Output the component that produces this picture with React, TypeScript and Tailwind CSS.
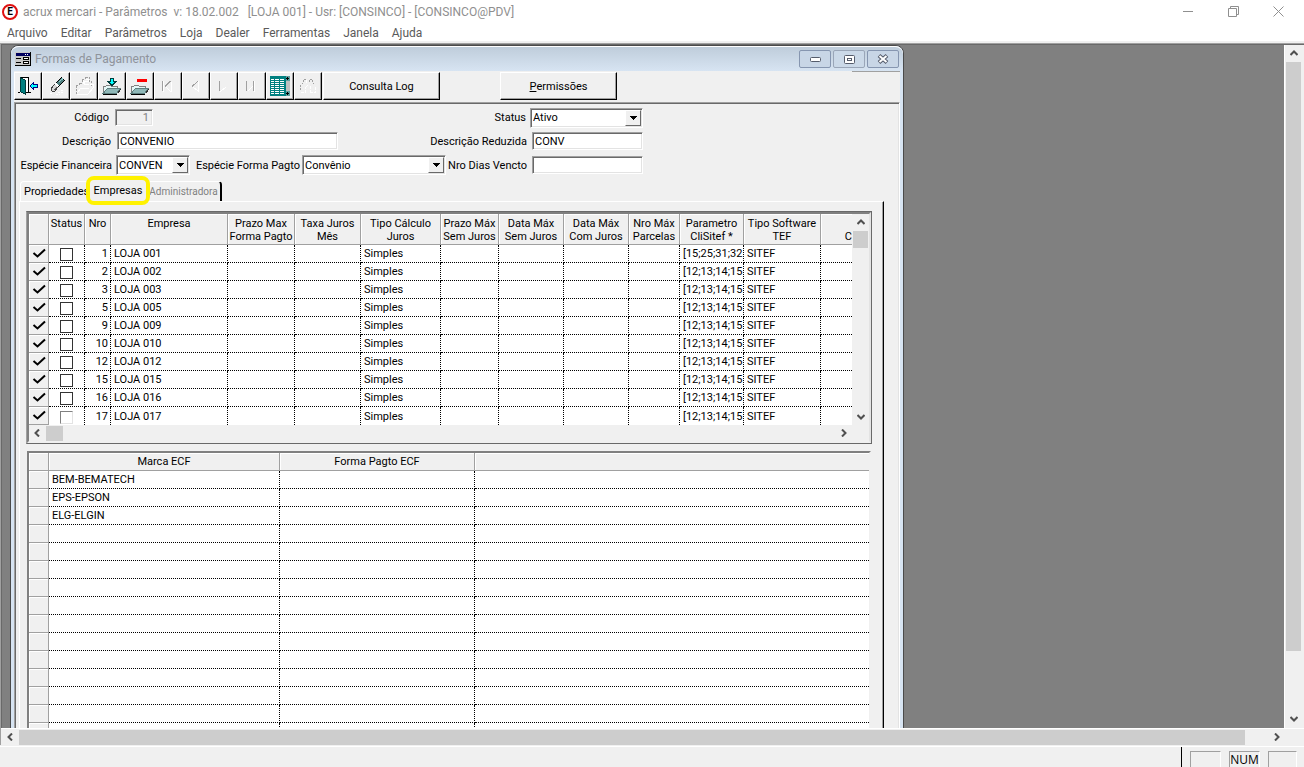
import { ReactNode } from 'react';
import clsx from 'clsx';

const menus = ['Arquivo', 'Editar', 'Parâmetros', 'Loja', 'Dealer', 'Ferramentas', 'Janela', 'Ajuda'];

const lojas = [1, 2, 3, 5, 9, 10, 12, 15, 16, 17];

const columns = [
  { label: '', width: 'w-5' },
  { label: 'Status', width: 'w-[36px]' },
  { label: 'Nro', width: 'w-[26px]' },
  { label: 'Empresa', width: 'w-[117px]' },
  { label: 'Prazo Max\nForma Pagto', width: 'w-[67px]' },
  { label: 'Taxa Juros\nMês', width: 'w-[66px]' },
  { label: 'Tipo Cálculo\nJuros', width: 'w-[80px]' },
  { label: 'Prazo Máx\nSem Juros', width: 'w-[58px]' },
  { label: 'Data Máx\nSem Juros', width: 'w-[65px]' },
  { label: 'Data Máx\nCom Juros', width: 'w-[65px]' },
  { label: 'Nro Máx\nParcelas', width: 'w-[51px]' },
  { label: 'Parametro\nCliSitef *', width: 'w-[64px]' },
  { label: 'Tipo Software\nTEF', width: 'w-[77px]' },
];

const marcas = ['BEM-BEMATECH', 'EPS-EPSON', 'ELG-ELGIN', '', '', '', '', '', '', '', '', '', '', '', ''];

const sunken =
  'border border-t-[#a0a0a0] border-l-[#a0a0a0] border-r-white border-b-white shadow-[inset_1px_1px_0_#696969,inset_-1px_-1px_0_#e3e3e3]';
const raised =
  'border border-t-white border-l-white border-r-black border-b-black bg-[#f0f0f0] shadow-[inset_-1px_-1px_0_#a0a0a0]';
const headCell = 'border-r border-b border-[#a0a0a0] bg-[#f0f0f0] font-normal shadow-[inset_1px_1px_0_white]';
const cell = 'h-[18px] overflow-hidden whitespace-nowrap border-r border-b border-dotted border-black p-0';

function Icon({ children }: { children: ReactNode }) {
  return (
    <svg width="20" height="20" viewBox="0 0 20 20" fill="none" shapeRendering="crispEdges">
      {children}
    </svg>
  );
}

function Folder() {
  return (
    <>
      <path d="M1.5 17V10.5H3.5L4.5 9.5H8.5L9.5 10.5H15.5V12" fill="#e4f6f6" stroke="#808080" />
      <path d="M1 17.5L5.5 12.5H18.5L14.5 17.5Z" fill="#8fb8b8" stroke="#5f8080" />
      <path d="M1 18.5H14.5" stroke="#000" />
      <path d="M15.5 17.5L19 13" stroke="#303030" />
    </>
  );
}

const tools = [
  {
    name: 'Sair',
    icon: (
      <Icon>
        <path d="M3 1.5H10.5V16.5H7" fill="#fff" stroke="#000" />
        <path d="M2.5 1.5L7.5 4.5V18.5L2.5 15.5Z" fill="#008080" stroke="#003c3c" />
        <path d="M0 16.5H2M11 16.5H13" stroke="#000" />
        <path d="M12 10L15.5 6.5V8.5H19V11.5H15.5V13.5Z" fill="#00ffff" stroke="#000080" />
      </Icon>
    ),
  },
  {
    name: 'Limpar',
    icon: (
      <Icon>
        <path d="M4 17.5H7M10 18.5H14M12 16.5H17M15 14.5H18" stroke="#fff" strokeDasharray="2 1" />
        <path d="M15.5 1.5L18.5 4.5L12 11L9 8Z" fill="#4f7f7f" stroke="#000" />
        <path d="M13 6L17 2.5" stroke="#8fd0d0" />
        <path d="M9 8L12 11L8.5 15.5H6.5L5.5 14V12Z" fill="#d8d8d8" stroke="#404040" />
        <path d="M9.5 7.5L12.5 10.5" stroke="#fff" strokeWidth="2" />
        <path d="M11 11L8 14" stroke="#606060" />
      </Icon>
    ),
  },
  {
    name: 'Abrir',
    icon: (
      <Icon>
        <path d="M2 18V9H5V7H8V3H11V1H15V5H17V10" stroke="#a0a0a0" strokeDasharray="2 1" />
        <path d="M3 18H14L19 12V8H16M3 17L7 12H15M12 3H14V5H10V8H15M9 4V8" stroke="#fff" />
      </Icon>
    ),
  },
  {
    name: 'Salvar',
    icon: (
      <Icon>
        <Folder />
        <path d="M8.5 2.5H11.5V5.5H14L10 9.5L6 5.5H8.5Z" fill="#00ffff" stroke="#003c3c" />
      </Icon>
    ),
  },
  {
    name: 'Excluir',
    icon: (
      <Icon>
        <Folder />
        <rect x="7" y="3" width="10" height="3" fill="#ff0000" />
      </Icon>
    ),
  },
  {
    name: 'Primeiro',
    icon: (
      <Icon>
        <path d="M4.5 5V15" stroke="#a0a0a0" />
        <path d="M5.5 5V16M8 11L13 16M13.5 6V16" stroke="#fff" />
        <path d="M7 10.5L12.5 5" stroke="#a0a0a0" />
      </Icon>
    ),
  },
  {
    name: 'Anterior',
    icon: (
      <Icon>
        <path d="M12.5 5V16M7 11L12 15" stroke="#fff" />
        <path d="M6 10.5L12 5" stroke="#a0a0a0" />
      </Icon>
    ),
  },
  {
    name: 'Próximo',
    icon: (
      <Icon>
        <path d="M5.5 5V15" stroke="#a0a0a0" />
        <path d="M6.5 15.5L12.5 10.5" stroke="#fff" />
      </Icon>
    ),
  },
  {
    name: 'Último',
    icon: (
      <Icon>
        <path d="M4.5 5V15M11.5 5V15" stroke="#a0a0a0" />
        <path d="M5.5 15.5L10.5 10.5M12.5 5V16" stroke="#fff" />
      </Icon>
    ),
  },
  {
    name: 'Grade',
    icon: (
      <Icon>
        <rect x="0" y="0" width="20" height="20" fill="#008080" />
        <path d="M1 3.5H14M1 5.5H14M1 7.5H14M1 9.5H14M1 11.5H14M1 13.5H14M1 15.5H14M1 17.5H14" stroke="#fff" />
        <path d="M4.5 2V19M9.5 2V19" stroke="#008080" />
        <rect x="16" y="5" width="4" height="10" fill="#c0c0c0" />
        <rect x="16" y="0" width="4" height="5" fill="#5f9f9f" />
        <rect x="16" y="15" width="4" height="5" fill="#5f9f9f" />
        <path d="M16 2.5H19M17.5 1V4M16 17.5H19M17.5 16V19" stroke="#000" />
      </Icon>
    ),
  },
  {
    name: 'Localizar',
    icon: (
      <Icon>
        <path d="M2.5 14V10L5.5 5.5V3.5H8M11 6V3.5H14L16 8" stroke="#a0a0a0" strokeDasharray="2 1" />
        <path d="M3 16.5H7.5V12L9.5 9M12 16.5H17.5V10M8.5 4V8M12 10V16" stroke="#fff" strokeDasharray="3 1" />
      </Icon>
    ),
  },
];

type Direction = 'up' | 'down' | 'left' | 'right';

const rotation = { up: '', right: 'rotate-90', down: 'rotate-180', left: '-rotate-90' };

function ScrollArrow({ dir }: { dir: Direction }) {
  return (
    <button type="button" aria-label={dir} className="flex size-4 shrink-0 items-center justify-center">
      <svg width="8" height="6" viewBox="0 0 8 6" fill="none" className={rotation[dir]}>
        <path d="M0.5 5L4 1.5L7.5 5" stroke="#505050" strokeWidth="2" />
      </svg>
    </button>
  );
}

function ComboBox({ id, value, className }: { id: string; value: string; className: string }) {
  return (
    <div className={clsx('relative h-5 bg-white', sunken, className)}>
      <select id={id} defaultValue={value} className="h-full w-full appearance-none pl-[2px] outline-none">
        <option>{value}</option>
      </select>
      <span className="pointer-events-none absolute inset-y-px right-px flex w-4 items-center justify-center border border-t-white border-l-white border-r-[#696969] border-b-[#696969] bg-[#f0f0f0]">
        <svg width="7" height="4" viewBox="0 0 7 4" shapeRendering="crispEdges">
          <path d="M0 0H7L3.5 4Z" />
        </svg>
      </span>
    </div>
  );
}

function FormFields() {
  return (
    <div className="flex w-[627px] flex-col pt-[3px]">
      <div className="flex h-[23px] items-center justify-between">
        <div className="flex items-center gap-[6px]">
          <label htmlFor="codigo" className="w-[93px] text-right">Código</label>
          <input id="codigo" defaultValue="1" disabled className={clsx('h-[17px] w-[38px] bg-[#f0f0f0] px-[3px] text-right text-[#808080]', sunken)} />
        </div>
        <div className="flex items-center gap-1">
          <label htmlFor="status">Status</label>
          <ComboBox id="status" value="Ativo" className="w-[113px]" />
        </div>
      </div>
      <div className="flex h-6 items-center justify-between">
        <div className="flex items-center gap-[6px]">
          <label htmlFor="descricao" className="w-[95px] text-right">Descrição</label>
          <input id="descricao" defaultValue="CONVENIO" className={clsx('h-[18px] w-[221px] bg-white px-[2px] outline-none', sunken)} />
        </div>
        <div className="flex items-center gap-[5px]">
          <label htmlFor="reduzida">Descrição Reduzida</label>
          <input id="reduzida" defaultValue="CONV" className={clsx('h-[18px] w-[111px] bg-white px-[2px] outline-none', sunken)} />
        </div>
      </div>
      <div className="flex h-6 items-center justify-between">
        <div className="flex items-center">
          <label htmlFor="especie" className="w-[96px] text-right">Espécie Financeira</label>
          <ComboBox id="especie" value="CONVEN" className="ml-1 w-[74px]" />
          <label htmlFor="forma" className="w-[110px] text-right">Espécie Forma Pagto</label>
          <ComboBox id="forma" value="Convênio" className="ml-[2px] w-[144px]" />
        </div>
        <div className="flex items-center gap-[5px]">
          <label htmlFor="dias">Nro Dias Vencto</label>
          <input id="dias" className={clsx('h-[18px] w-[111px] bg-white px-[2px] outline-none', sunken)} />
        </div>
      </div>
    </div>
  );
}

function EmpresasGrid() {
  return (
    <div className="border border-[#696969] border-l-[#a0a0a0]">
      <div className="border-2 border-t-[#808080] border-r-[#e3e3e3] border-b-[#f0f0f0] border-l-[#808080]">
        <div className="flex">
          <div className="h-[211px] min-w-0 flex-1 overflow-hidden bg-white">
            <table className="w-full table-fixed border-separate border-spacing-0">
              <thead>
                <tr className="h-[31px] align-top">
                  {columns.map((c, i) => (
                    <th key={i} className={clsx(headCell, c.width, 'whitespace-pre px-0 pt-[3px] pb-0 leading-[13px]')}>
                      {c.label}
                    </th>
                  ))}
                  <th className={clsx(headCell, 'overflow-hidden border-r-0 px-0 pt-[3px] pb-0 text-right leading-[13px] whitespace-pre')}>{'\nC'}</th>
                </tr>
              </thead>
              <tbody>
                {lojas.map((nro) => {
                  const last = nro === 17;
                  return (
                    <tr key={nro}>
                      <td className="h-[18px] border-r border-b border-[#a0a0a0] bg-[#f0f0f0] p-0 shadow-[inset_1px_1px_0_white]">
                        <svg width="14" height="11" viewBox="0 0 14 11" fill="none" className="mx-auto">
                          <path d="M1.5 5L5.500 8.5L13 1.5" stroke="#000" strokeWidth="2" />
                        </svg>
                      </td>
                      <td className={clsx(cell, last && 'border-b-0')}>
                        <input
                          type="checkbox"
                          aria-label={`Status ${nro}`}
                          className={clsx(
                            'mx-auto mt-[2px] block size-[13px] appearance-none border bg-white',
                            last ? 'border-t-[#808080] border-l-[#808080] border-r-[#e3e3e3] border-b-[#e3e3e3]' : 'border-[#333333]'
                          )}
                        />
                      </td>
                      <td className={clsx(cell, last && 'border-b-0', 'pr-[2px] text-right')}>{nro}</td>
                      <td className={clsx(cell, last && 'border-b-0', 'pl-[3px]')}>LOJA {String(nro).padStart(3, '0')}</td>
                      <td className={clsx(cell, last && 'border-b-0')} />
                      <td className={clsx(cell, last && 'border-b-0')} />
                      <td className={clsx(cell, last && 'border-b-0', 'pl-[3px]')}>Simples</td>
                      <td className={clsx(cell, last && 'border-b-0')} />
                      <td className={clsx(cell, last && 'border-b-0')} />
                      <td className={clsx(cell, last && 'border-b-0')} />
                      <td className={clsx(cell, last && 'border-b-0')} />
                      <td className={clsx(cell, last && 'border-b-0', 'pl-[3px]')}>{nro === 1 ? '[15;25;31;32' : '[12;13;14;15'}</td>
                      <td className={clsx(cell, last && 'border-b-0', 'pl-[3px]')}>SITEF</td>
                      <td className={clsx(cell, last && 'border-b-0', 'border-r-0')} />
                    </tr>
                  );
                })}
              </tbody>
            </table>
          </div>
          <div className="flex w-[17px] flex-col items-center">
            <ScrollArrow dir="up" />
            <div className="mt-px h-[17px] w-[15px] bg-[#cdcdcd]" />
            <div className="mt-auto">
              <ScrollArrow dir="down" />
            </div>
          </div>
        </div>
        <div className="flex h-4 items-center pr-[17px]">
          <ScrollArrow dir="left" />
          <div className="ml-px h-[15px] w-[17px] bg-[#cdcdcd]" />
          <div className="ml-auto">
            <ScrollArrow dir="right" />
          </div>
        </div>
      </div>
    </div>
  );
}

function MarcasGrid() {
  return (
    <div className="mt-[7px] mr-px ml-px border-2 border-t-[#808080] border-l-[#808080] border-r-[#f0f0f0] border-b-white bg-white">
      <table className="w-full table-fixed border-separate border-spacing-0">
        <thead>
          <tr className="h-[18px]">
            <th className={clsx(headCell, 'w-5 p-0')} />
            <th className={clsx(headCell, 'w-[231px] p-0')}>Marca ECF</th>
            <th className={clsx(headCell, 'w-[195px] p-0')}>Forma Pagto ECF</th>
            <th className={clsx(headCell, 'border-r-0 p-0')} />
          </tr>
        </thead>
        <tbody>
          {marcas.map((marca, i) => (
            <tr key={i}>
              <td className="h-[18px] border-r border-b border-[#a0a0a0] bg-[#f0f0f0] p-0 shadow-[inset_1px_1px_0_white]" />
              <td className={clsx(cell, 'pl-[3px]')}>{marca}</td>
              <td className={cell} />
              <td className={clsx(cell, 'border-r-0')} />
            </tr>
          ))}
        </tbody>
      </table>
    </div>
  );
}

function Tabs() {
  return (
    <div className="ml-[5px] flex h-5 items-end">
      <button type="button" className="h-5 w-[69px] rounded-tl-sm border-t border-l border-white pl-[3px] text-left">
        Propriedades
      </button>
      <div className="relative h-[22px] w-[58px]">
        <button type="button" className="h-full w-full text-center">Empresas</button>
        <span className="pointer-events-none absolute -inset-x-[3px] -top-[3px] h-[29px] rounded-lg border-4 border-[#fff200]" />
      </div>
      <button type="button" className="h-5 w-[75px] rounded-tr-sm border-t border-r-2 border-t-white border-r-black text-[10px] text-[#808080]">
        Administradora
      </button>
    </div>
  );
}

function ChildWindow() {
  return (
    <section className="ml-[8px] flex h-[900px] w-[894px] shrink-0 flex-col rounded-t-lg border border-[#4a4a4a] bg-[#d7e4f2]">
      <div className="flex h-[25px] shrink-0 items-center rounded-t-lg border-t border-white bg-linear-to-b from-[#bfcddb] to-[#d7e4f2] pr-1 pl-1">
        <svg width="16" height="14" viewBox="0 0 16 14" shapeRendering="crispEdges">
          <rect width="16" height="14" fill="#000" />
          <rect x="0" y="0" width="15" height="13" fill="#c8c8c8" />
          <rect x="1" y="1" width="14" height="3" fill="#000060" />
          <path d="M10 2h1v1h-1zM12 2h1v1h-1z" fill="#fff" />
          <path d="M1 6h5v1H1zM1 10h5v1H1zM8 5h6v3H8zM8 9h6v3H8z" />
          <path d="M9 6h4v1H9zM9 10h4v1H9z" fill="#fff" />
        </svg>
        <h1 className="ml-1 pt-px text-[12px] text-[#8f949c]">Formas de Pagamento</h1>
        <div className="ml-auto flex gap-[2px]">
          <button type="button" aria-label="Minimizar" className="flex h-[18px] w-8 items-center justify-center rounded-xs border border-[#8696b0] bg-[#c8d6e6]">
            <svg width="11" height="5" viewBox="0 0 11 5"><rect x="0.5" y="0.5" width="10" height="4" rx="1" fill="#fff" stroke="#555c6b" /></svg>
          </button>
          <button type="button" aria-label="Restaurar" className="flex h-[18px] w-8 items-center justify-center rounded-xs border border-[#9aa6b8] bg-[#cbd9e8]">
            <svg width="11" height="9" viewBox="0 0 11 9" fill="#fff" stroke="#555c6b">
              <rect x="0.5" y="0.5" width="10" height="8" rx="1" />
              <rect x="3.5" y="3.5" width="4" height="2" />
            </svg>
          </button>
          <button type="button" aria-label="Fechar" className="flex h-[18px] w-8 items-center justify-center rounded-xs border border-[#8696b0] bg-[#c8d6e6]">
            <svg width="12" height="10" viewBox="0 0 12 10">
              <path d="M2 1.5L10 8.5M10 1.5L2 8.5" stroke="#555c6b" strokeWidth="4" />
              <path d="M2.5 2L9.5 8M9.5 2L2.5 8" stroke="#fff" strokeWidth="2" />
            </svg>
          </button>
        </div>
      </div>

      <div className="mr-[3px] ml-[3px] flex min-h-0 flex-1 flex-col bg-[#f0f0f0]">
        {/* Toolbar */}
        <div className="flex h-[31px] shrink-0 items-start">
          <div className="flex pt-px">
            {tools.map((t) => (
              <button key={t.name} type="button" aria-label={t.name} className={clsx('flex h-7 w-7 items-center justify-center', raised)}>
                {t.icon}
              </button>
            ))}
            <button type="button" className={clsx('ml-px h-7 w-[117px] pt-px', raised)}>Consulta Log</button>
            <button type="button" className={clsx('ml-15 h-7 w-[117px] pt-px', raised)}>
              <span className="underline">P</span>ermissões
            </button>
          </div>
          <div className="ml-auto h-px w-12 bg-[#a0a0a0]" />
        </div>

        <div className={clsx('flex flex-1 flex-col', sunken)}>
          <div className="pl-px">
            <FormFields />
          </div>
          <div className="mt-1">
            <Tabs />
          </div>
          <div className="mr-[15px] ml-1 flex-1 border-t border-r border-l border-t-white border-r-black border-l-white pt-[9px] pr-[11px] pl-[6px] shadow-[inset_-1px_0_0_#a0a0a0]">
            <EmpresasGrid />
            <MarcasGrid />
          </div>
        </div>
      </div>
    </section>
  );
}

export default function App() {
  return (
    <div className="flex h-screen flex-col overflow-hidden bg-[#f0f0f0] font-['Roboto',sans-serif] text-[11px] leading-[13px] text-black">
      <header className="bg-white text-[12px]">
        <div className="flex h-[23px] items-center pl-[2px] text-[#8f8f8f]">
          <span className="flex size-4 items-center justify-center rounded-full border-2 border-[#e01010] text-[10px] font-bold text-black">E</span>
          <span className="ml-[5px] pt-px whitespace-pre">acrux mercari - Parâmetros  v: 18.02.002   [LOJA 001] - Usr: [CONSINCO] - [CONSINCO@PDV]</span>
          <div className="ml-auto flex items-center gap-[34px] pr-5">
            <button type="button" aria-label="Minimizar">
              <svg width="11" height="11" viewBox="0 0 11 11"><path d="M0 5.5H10" stroke="#8f8f8f" /></svg>
            </button>
            <button type="button" aria-label="Restaurar">
              <svg width="11" height="11" viewBox="0 0 11 11" fill="none" stroke="#8f8f8f">
                <path d="M0.5 2.5H8.5V10.5H0.5ZM2.5 2.5V0.5H10.5V8.5H8.5" />
              </svg>
            </button>
            <button type="button" aria-label="Fechar">
              <svg width="11" height="11" viewBox="0 0 11 11"><path d="M0.5 0.5L10.5 10.5M10.5 0.5L0.5 10.5" stroke="#8f8f8f" /></svg>
            </button>
          </div>
        </div>
        <nav className="flex h-5 items-center gap-[13px] border-b-2 border-[#f0f0f0] pt-[2px] pl-[7px] text-[#5a5a5a]">
          {menus.map((m) => (
            <a key={m} href="#">{m}</a>
          ))}
        </nav>
      </header>

      <main className="flex min-h-0 flex-1 flex-col border-t border-l border-[#a0a0a0]">
        <div className="flex min-h-0 flex-1 border-t border-l border-[#696969]">
          <div className="min-w-0 flex-1 overflow-hidden bg-[#808080]">
            <ChildWindow />
          </div>
          <div className="mr-[2px] flex w-[18px] flex-col items-center border-l border-white">
            <ScrollArrow dir="up" />
            <div className="mt-px w-[15px] flex-1 bg-[#cdcdcd]" />
            <div className="mt-[60px] mb-px">
              <ScrollArrow dir="down" />
            </div>
          </div>
        </div>
        <div className="flex h-[17px] shrink-0 items-center border-t border-white pl-px">
          <ScrollArrow dir="left" />
          <div className="ml-px h-[15px] flex-1 bg-[#cdcdcd]" />
          <div className="mr-[19px] ml-6">
            <ScrollArrow dir="right" />
          </div>
        </div>
      </main>

      <footer className="mt-px flex h-[21px] shrink-0 items-end border-t border-white font-['Open_Sans',sans-serif] text-[12px]">
        <div className="ml-auto h-5 w-px bg-black" />
        <div className="flex h-4 gap-2 pr-[7px] pl-2">
          <div className="w-[31px] border-t border-r border-l border-t-[#a0a0a0] border-l-[#a0a0a0] border-r-white" />
          <div className="w-[31px] border-t border-r border-l border-t-[#a0a0a0] border-l-[#a0a0a0] border-r-white text-center leading-[16px]">NUM</div>
          <div className="w-[29px] border-t border-r border-l border-t-[#a0a0a0] border-l-[#a0a0a0] border-r-white" />
        </div>
      </footer>
    </div>
  );
}
